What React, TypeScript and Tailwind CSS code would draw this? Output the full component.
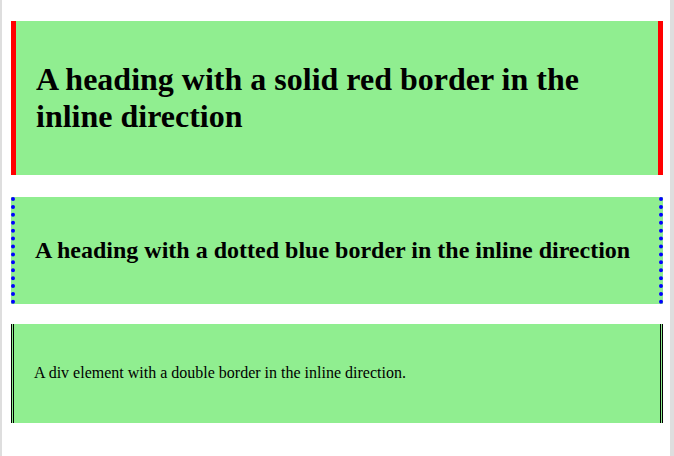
import React from 'react';

export default function App() {
  return (
    <div className="flex h-[456px] w-[674px] bg-white font-['Liberation_Serif',serif] text-black">
      {/* frame edges */}
      <div className="w-[2px] bg-[#dedede]" />
      <div className="flex-1 pl-[9px] pr-[7px]">
        <div className="mt-[21px] border-x-[5px] border-solid border-x-[#ff0000] bg-[#90ee90] px-5 py-10">
          <h1 className="m-0 text-[32px] font-bold leading-[1.15]">
            A heading with a solid red border in the inline direction
          </h1>
        </div>

        <div className="mt-[22px] border-x-4 border-dotted border-x-[#0000ff] bg-[#90ee90] px-5 py-10">
          <h2 className="m-0 text-[24px] font-bold leading-[1.15]">
            A heading with a dotted blue border in the inline direction
          </h2>
        </div>

        <div className="mt-5 border-x-[3px] border-double border-x-black bg-[#90ee90] px-5 py-10 text-[16px] leading-[1.15]">
          A div element with a double border in the inline direction.
        </div>
      </div>
      <div className="w-[4px] bg-[#dedede]" />
    </div>
  );
}
